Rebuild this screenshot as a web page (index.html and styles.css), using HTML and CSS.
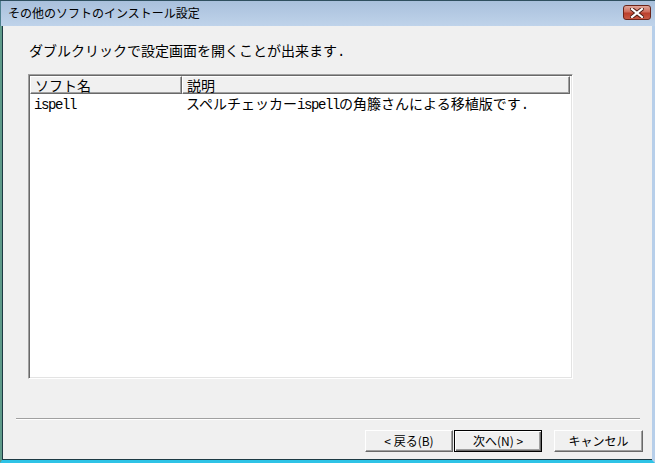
FILE: index.html
```html
<!DOCTYPE html>
<html lang="ja">
<head>
  <meta charset="UTF-8">
  <title>その他のソフトのインストール設定</title>
  <link rel="stylesheet" href="styles.css">
</head>
<body>
  <div class="window">
    <!-- タイトルバー -->
    <div class="titlebar">
      <span class="title">その他のソフトのインストール設定</span>
      <div class="close">
        <svg width="14" height="10" viewBox="0 0 14 10">
          <path d="M2 1 L12 9 M12 1 L2 9" stroke="#4a1a12" stroke-width="4" stroke-linecap="square"/>
          <path d="M2 1 L12 9 M12 1 L2 9" stroke="#fff" stroke-width="2.2" stroke-linecap="square"/>
        </svg>
      </div>
    </div>

    <div class="content">
      <p class="hint">ダブルクリックで設定画面を開くことが出来ます<span class="han">.</span></p>

      <!-- ソフト一覧 -->
      <div class="listview">
        <div class="lv-header">
          <div class="hcol col-name">ソフト名</div>
          <div class="hcol col-desc">説明</div>
        </div>
        <div class="lv-row">
          <div class="cell col-name"><span class="han">ispell</span></div>
          <div class="cell col-desc">スペルチェッカー<span class="han">ispell</span>の角籐さんによる移植版です<span class="han">.</span></div>
        </div>
      </div>

      <div class="separator"></div>

      <div class="buttons">
        <div class="btn">&lt; 戻る(B)</div>
        <div class="btn btn-default">次へ(N) &gt;</div>
        <div class="btn btn-cancel">キャンセル</div>
      </div>
    </div>
  </div>
</body>
</html>
```

FILE: styles.css
```css
/* ウィンドウ全体 */
body {
  margin: 0;
  padding: 0;
  background-color: #3c6a5a;
  font-family: "Noto Sans CJK JP", sans-serif;
  color: #000;
}

.window {
  box-sizing: border-box;
  width: 655px;
  height: 463px;
  display: flex;
  flex-direction: column;
  background-color: #f0f0f0;
  border-left: 2px solid #5f9b8a;
  border-right: 3px solid #b7cfea;
  border-bottom: 3px solid #2ec3e6;
  box-shadow: inset 1px 0 0 #1d3a44, inset 0 -1px 0 #1d3a44;
}

.titlebar {
  height: 26px;
  box-sizing: border-box;
  border-top: 1px solid #2f4f5f;
  margin-left: -2px;
  margin-right: -3px;
  padding-left: 8px;
  display: flex;
  align-items: center;
  justify-content: space-between;
  background: linear-gradient(#a9c0dc, #bfd3ea);
  box-shadow: inset 1px 0 0 #4d7f8e;
}

.title {
  font-size: 12px;
  line-height: 14px;
  margin-top: -2px;
}

.close {
  width: 28px;
  height: 15px;
  margin-right: 4px;
  margin-top: -2px;
  box-sizing: border-box;
  border: 1px solid #6b2419;
  border-radius: 3px;
  background: linear-gradient(#e0a79b 0%, #cf6c5b 45%, #bb3f2c 55%, #c85a45 100%);
  display: flex;
  align-items: center;
  justify-content: center;
}

.content {
  padding: 16px 9px 0 14px;
  display: flex;
  flex-direction: column;
}

.hint {
  margin: 0 0 0 13px;
  font-size: 14px;
  line-height: 16px;
}

/* 半角文字 (等幅) */
.han {
  font-family: "Liberation Mono", monospace;
  font-size: 14px;
  letter-spacing: -1.4px;
}

/* リストビュー */
.listview {
  box-sizing: border-box;
  width: 545px;
  height: 305px;
  margin: 14px 0 0 12px;
  background-color: #fff;
  border: 1px solid;
  border-color: #a0a0a0 #fff #fff #a0a0a0;
  box-shadow: inset 1px 1px 0 #696969, inset -1px -1px 0 #e3e3e3;
  padding: 1px 2px 1px 1px;
}

.lv-header {
  display: flex;
  height: 18px;
}

.hcol {
  box-sizing: border-box;
  height: 18px;
  background-color: #f0f0f0;
  border-top: 1px solid #fff;
  border-left: 1px solid #fff;
  border-right: 1px solid #696969;
  border-bottom: 1px solid #696969;
  box-shadow: inset -1px -1px 0 #a0a0a0;
  font-size: 14px;
  line-height: 16px;
  padding-left: 4px;
  overflow: hidden;
}

.col-name {
  width: 152px;
}

.col-desc {
  flex: 1;
}

.lv-row {
  display: flex;
  height: 18px;
}

.cell {
  box-sizing: border-box;
  font-size: 14px;
  line-height: 18px;
  padding-left: 4px;
  white-space: nowrap;
}

.separator {
  width: 624px;
  height: 0;
  margin-top: 39px;
  border-top: 1px solid #a0a0a0;
  border-bottom: 1px solid #fff;
}

/* ボタン */
.buttons {
  display: flex;
  justify-content: flex-end;
  gap: 1px;
  margin-top: 10px;
}

.btn {
  box-sizing: border-box;
  width: 88px;
  height: 22px;
  background-color: #f0f0f0;
  border-top: 1px solid #fff;
  border-left: 1px solid #fff;
  border-right: 1px solid #696969;
  border-bottom: 1px solid #696969;
  box-shadow: inset -1px -1px 0 #a0a0a0;
  font-size: 12px;
  line-height: 19px;
  text-align: center;
}

.btn-default {
  border: 1px solid #000;
  box-shadow: inset 1px 1px 0 #fff, inset -1px -1px 0 #696969, inset -2px -2px 0 #a0a0a0;
}

.btn-cancel {
  width: 89px;
  margin-left: 11px;
}
```
